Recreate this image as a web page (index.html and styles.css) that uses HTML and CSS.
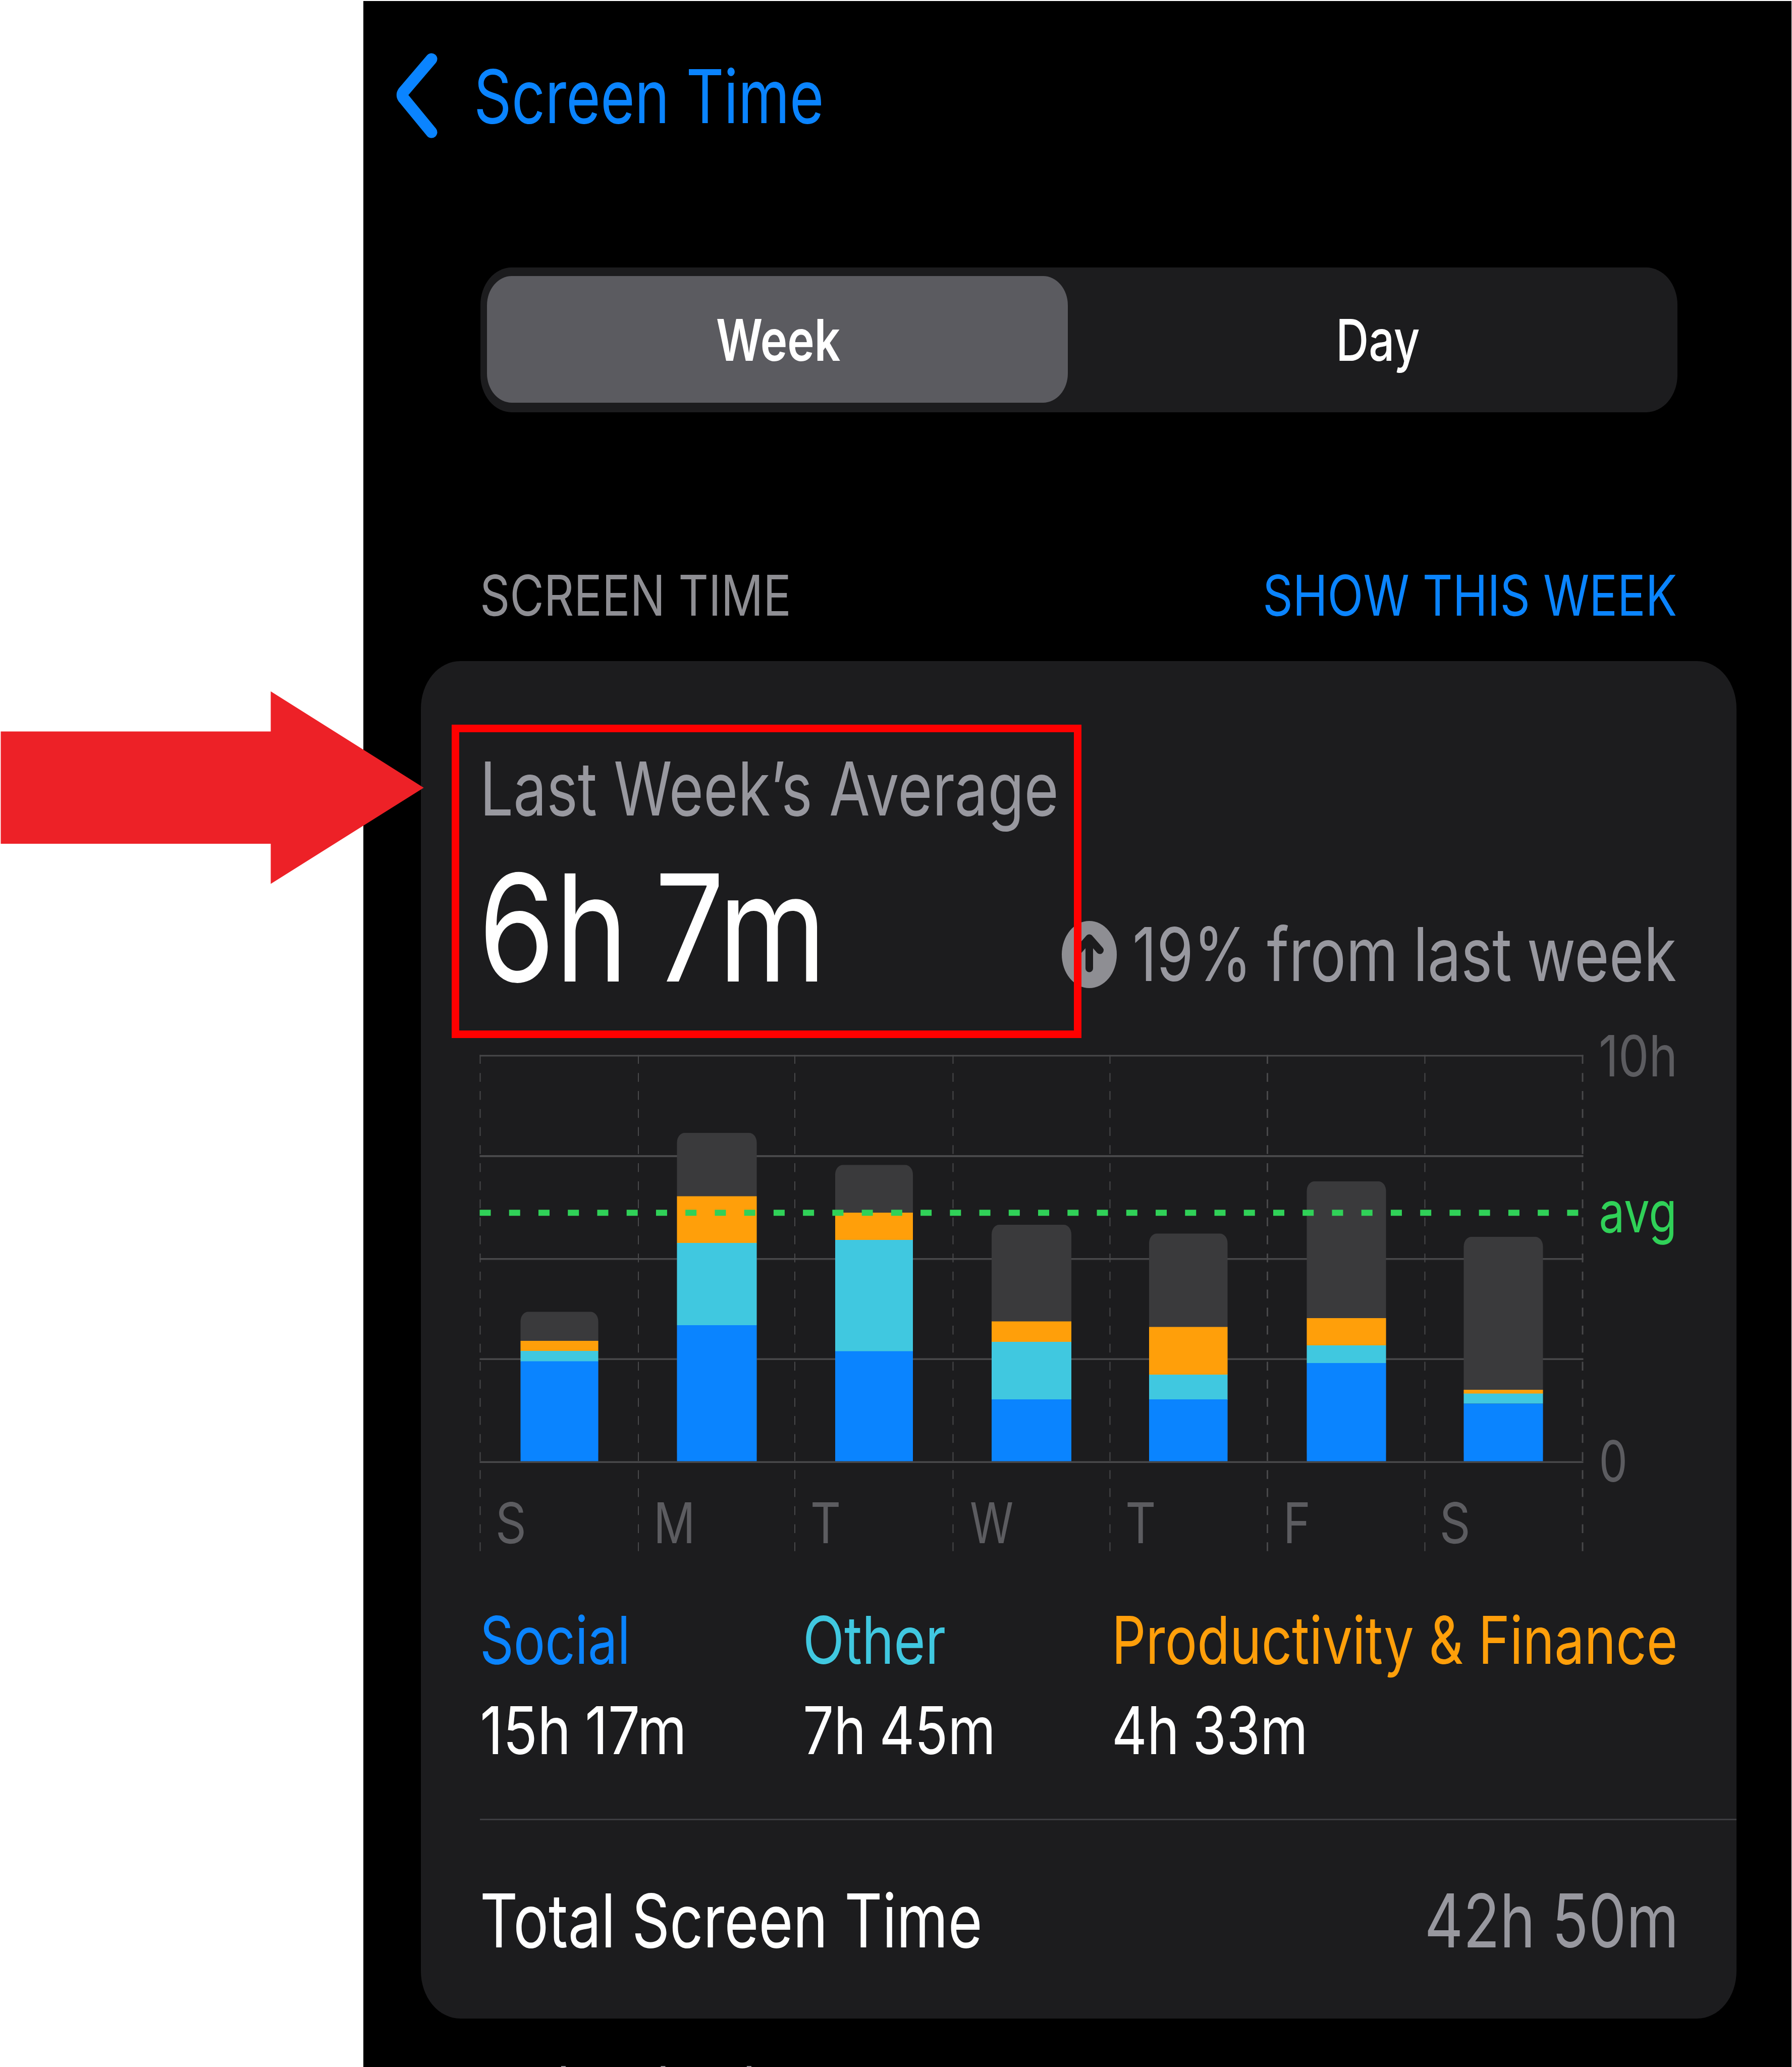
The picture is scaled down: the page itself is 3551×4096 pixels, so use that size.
FILE: index.html
```html
<!DOCTYPE html>
<html lang="en">
<head>
<meta charset="utf-8">
<title>Screen Time</title>
<link rel="stylesheet" href="styles.css">
</head>
<body>
<main class="phone">
  <header class="nav">
    <svg class="chevron" viewBox="0 0 84 170" aria-hidden="true"><path d="M70 13 L14.500 78 Q10 84.200 14.500 90.500 L70 158"/></svg>
    <span class="nav-title">Screen Time</span>
  </header>

  <div class="segmented">
    <div class="segment segment-on"><span>Week</span></div>
    <div class="segment segment-off"><span>Day</span></div>
  </div>

  <div class="section-head">
    <span class="section-title">SCREEN TIME</span>
    <span class="section-link">SHOW THIS WEEK</span>
  </div>

  <section class="card">
    <div class="avg-label"><span>Last Week’s Average</span></div>
    <div class="summary">
      <span class="avg-value">6h 7m</span>
      <div class="trend">
        <svg class="trend-icon" viewBox="0 0 109 133" aria-hidden="true">
          <ellipse cx="54.500" cy="66.500" rx="54.500" ry="66.500"/>
          <path d="M54.500 94 V35 M33.500 58 L54.500 34 L75.500 58"/>
        </svg>
        <span class="trend-text">19% from last week</span>
      </div>
    </div>

    <svg class="chart" viewBox="950 2010 2400 1100">
      <g class="columns">
        <path d="M951.500 2090.500V3074M1265 2090.500V3074M1575 2090.500V3074M1888.500 2090.500V3074M2199.500 2090.500V3074M2823.500 2090.500V3074"/>
        <path class="wide" d="M2511.500 2090.500V3074M3136 2090.500V3074"/>
      </g>
      <g class="rows">
        <rect x="950.500" y="2090.500" width="2187" height="3"/>
        <rect x="950.500" y="2289" width="2187" height="4"/>
        <rect x="950.500" y="2493" width="2187" height="3.500"/>
        <rect x="950.500" y="2691.500" width="2187" height="3.500"/>
        <rect x="950.500" y="2895.500" width="2187" height="3.500"/>
      </g>
      <g class="rest">
        <rect x="1031.500" y="2599.500" width="154" height="296" rx="15" ry="19"/>
        <rect x="1341.500" y="2245" width="158" height="650.500" rx="15" ry="19"/>
        <rect x="1655" y="2308.500" width="154" height="587" rx="15" ry="19"/>
        <rect x="1965" y="2427" width="158" height="468.500" rx="15" ry="19"/>
        <rect x="2277" y="2444.500" width="155.500" height="451" rx="15" ry="19"/>
        <rect x="2589.500" y="2341" width="157" height="554.500" rx="15" ry="19"/>
        <rect x="2900.500" y="2451" width="157" height="444.500" rx="15" ry="19"/>
      </g>
      <g class="productivity">
        <rect x="1031.500" y="2657" width="154" height="21"/>
        <rect x="1341.500" y="2370.500" width="158" height="93"/>
        <rect x="1655" y="2403" width="154" height="55"/>
        <rect x="1965" y="2618.500" width="158" height="41"/>
        <rect x="2277" y="2629.500" width="155.500" height="95"/>
        <rect x="2589.500" y="2612" width="157" height="54"/>
        <rect x="2900.500" y="2754" width="157" height="8"/>
      </g>
      <g class="other">
        <rect x="1031.500" y="2677" width="154" height="21"/>
        <rect x="1341.500" y="2463" width="158" height="163"/>
        <rect x="1655" y="2457" width="154" height="221"/>
        <rect x="1965" y="2659" width="158" height="115"/>
        <rect x="2277" y="2724" width="155.500" height="50"/>
        <rect x="2589.500" y="2666" width="157" height="35"/>
        <rect x="2900.500" y="2761.500" width="157" height="20"/>
      </g>
      <g class="social">
        <rect x="1031.500" y="2697.500" width="154" height="198"/>
        <rect x="1341.500" y="2626" width="158" height="269.500"/>
        <rect x="1655" y="2677.500" width="154" height="218"/>
        <rect x="1965" y="2773" width="158" height="122.500"/>
        <rect x="2277" y="2773" width="155.500" height="122.500"/>
        <rect x="2589.500" y="2701" width="157" height="194.500"/>
        <rect x="2900.500" y="2781.500" width="157" height="114"/>
      </g>
      <path class="average" d="M950.500 2403.200H3137"/>
      <g class="day">
        <text transform="translate(981.700 3058.300) scale(.86 1)">S</text>
        <text transform="translate(1295 3058.300) scale(.824 1)">M</text>
        <text transform="translate(1605.700 3058.300) scale(.845 1)">T</text>
        <text transform="translate(1922.100 3058.300) scale(.787 1)">W</text>
        <text transform="translate(2230 3058.300) scale(.845 1)">T</text>
        <text transform="translate(2542.800 3058.300) scale(.828 1)">F</text>
        <text transform="translate(2852.500 3058.300) scale(.86 1)">S</text>
      </g>
      <g class="scale">
        <text transform="translate(3168.100 2132.500) scale(.848 1)">10h</text>
        <text class="scale-avg" transform="translate(3168.400 2442.300) scale(.803 1)">avg</text>
        <text transform="translate(3168.400 2936) scale(.793 1)">0</text>
      </g>
    </svg>

    <div class="legend">
      <div class="entry">
        <span class="name name-social">Social</span>
        <span class="time time-social">15h 17m</span>
      </div>
      <div class="entry">
        <span class="name name-other">Other</span>
        <span class="time">7h 45m</span>
      </div>
      <div class="entry">
        <span class="name name-productivity">Productivity &amp; Finance</span>
        <span class="time">4h 33m</span>
      </div>
    </div>

    <div class="total">
      <span class="total-label">Total Screen Time</span>
      <span class="total-value">42h 50m</span>
    </div>
  </section>

  <p class="updated"><span>Updated today at 4:27 PM</span></p>
</main>

<div class="highlight"></div>
<svg class="pointer" viewBox="0 0 840 382" aria-hidden="true"><path d="M1.500 79.500H536.500V0L839.700 191L536.500 381.500V302H1.500Z"/></svg>
</body>
</html>
```
FILE: styles.css
```css
* { box-sizing: border-box; }

body {
  position: relative;
  width: 3551px;
  height: 4096px;
  margin: 0;
  overflow: hidden;
  background: #fff;
  color: #fff;
  font-family: Inter, "Liberation Sans", sans-serif;
  font-weight: 400;
  white-space: nowrap;
}

svg { display: block; flex: none; }

/* The type is condensed horizontally, so every label is squeezed from its anchored edge. */
span { display: block; transform-origin: left center; }

.phone {
  height: 4094px;
  margin: 2px 1px 0 720px;
  overflow: hidden;
  background: #000;
}

.nav {
  display: flex;
  align-items: center;
  gap: 70px;
  height: 377px;
  padding-left: 65px;
}
.chevron { width: 84px; height: 170px; margin-top: -3px; }
.chevron path {
  fill: none;
  stroke: #0a84ff;
  stroke-width: 23px;
  stroke-linecap: round;
  stroke-linejoin: round;
}
.nav-title {
  color: #0a84ff;
  font-size: 147px;
  line-height: 150px;
  transform: scaleX(.792);
}

.segmented {
  display: flex;
  width: 2372px;
  height: 286.500px;
  margin: 151px 0 0 232px;
  padding: 17px 0 19px 12.500px;
  border-radius: 62px / 74px;
  background: #1c1c1e;
}
.segment {
  display: flex;
  align-items: center;
  justify-content: center;
  font-size: 114px;
}
.segment span { transform-origin: center; }
.segment-on {
  width: 1151px;
  padding: 2px 0 0 4px;
  border-radius: 49px / 58px;
  background: #5b5b60;
  font-weight: 600;
}
.segment-on span { transform: scaleX(.7935); }
.segment-off { flex: 1; padding: 2px 0 0 21px; font-weight: 500; }
.segment-off span { transform: scaleX(.79); }

.section-head {
  display: flex;
  justify-content: space-between;
  margin: 303px 227.400px 70px 231px;
  font-size: 111px;
  line-height: 120px;
}
.section-title { color: #8e8e93; transform: scaleX(.833); }
.section-link {
  color: #0a84ff;
  transform: scaleX(.835);
  transform-origin: right center;
}

.card {
  width: 2607px;
  height: 2690.700px;
  margin-left: 114.300px;
  padding: 178.500px 0 0 116.500px;
  border-radius: 78px / 94px;
  background: #1c1c1e;
}

.avg-label { color: #98989f; font-size: 147px; line-height: 150px; }
.avg-label span { transform: scaleX(.797); }

.summary {
  display: flex;
  align-items: flex-end;
  justify-content: space-between;
  margin: 49.600px 117.700px 0 -2.600px;
}
.avg-value {
  font-size: 294.500px;
  line-height: 300px;
  word-spacing: -20px;
  transform: scaleX(.832);
}
.trend {
  display: flex;
  align-items: center;
  gap: 31.300px;
  width: 1220px;
  margin-bottom: 21.300px;
  color: #98989f;
  font-size: 147px;
  line-height: 150px;
}
.trend-icon { width: 109px; height: 133px; }
.trend-icon ellipse { fill: #8e8e93; }
.trend-icon path {
  fill: none;
  stroke: #1c1c1e;
  stroke-width: 15px;
  stroke-linecap: round;
  stroke-linejoin: round;
}
.trend-text { word-spacing: -4px; transform: scaleX(.8015); }

.chart {
  width: 2400px;
  height: 1100px;
  margin: 22.400px 0 0 -.7px;
}
.columns path {
  stroke: #48484a;
  stroke-width: 2px;
  stroke-dasharray: 17.500px 18.270px;
}
.columns .wide { stroke-width: 3px; }
.rows { fill: #48484a; }
.rest { fill: #3a3a3c; }
.productivity { fill: #ff9f0a; }
.other { fill: #40c8e0; }
.social { fill: #0a84ff; }
.average {
  stroke: #30d158;
  stroke-width: 12px;
  stroke-dasharray: 22px 36.240px;
}
.day { fill: #5c5c60; font-size: 111px; }
.scale { fill: #5c5c60; font-size: 113px; }
.scale-avg { fill: #30d158; }

.legend {
  display: grid;
  grid-template-columns: 640.500px 611.700px 1fr;
  margin-top: 69.700px;
  font-size: 130.600px;
  line-height: 140px;
}
.entry { display: grid; gap: 39.100px; }
.name-social { color: #0a84ff; transform: scaleX(.7974); }
.name-other { color: #40c8e0; transform: scaleX(.820); }
.name-productivity { color: #ff9f0a; transform: scaleX(.8107); }
.time { word-spacing: -5px; transform: scaleX(.829); }
.time-social { transform: scaleX(.861); }

.total {
  display: flex;
  justify-content: space-between;
  margin-top: 105.200px;
  padding: 124px 114.200px 0 0;
  border-top: 3px solid #3d3d41;
  font-size: 147px;
  line-height: 150px;
}
.total-label { transform: scaleX(.793); }
.total-value {
  color: #98989f;
  transform: scaleX(.808);
  transform-origin: right center;
}

/* Only the tallest ascenders of this line reach into view. */
.updated {
  margin: 80px 0 0 230.300px;
  color: #8e8e93;
  font-family: Roboto, "Liberation Sans", sans-serif;
  font-size: 114px;
  line-height: 120px;
}
.updated span { transform: scaleX(.881); }

.highlight {
  position: absolute;
  left: 895.400px;
  top: 1435.800px;
  width: 1247.200px;
  height: 621.200px;
  border: 15px solid #f00;
}
.pointer {
  position: absolute;
  left: 0;
  top: 1370px;
  width: 840px;
  height: 382px;
  fill: #ed2127;
}
```
